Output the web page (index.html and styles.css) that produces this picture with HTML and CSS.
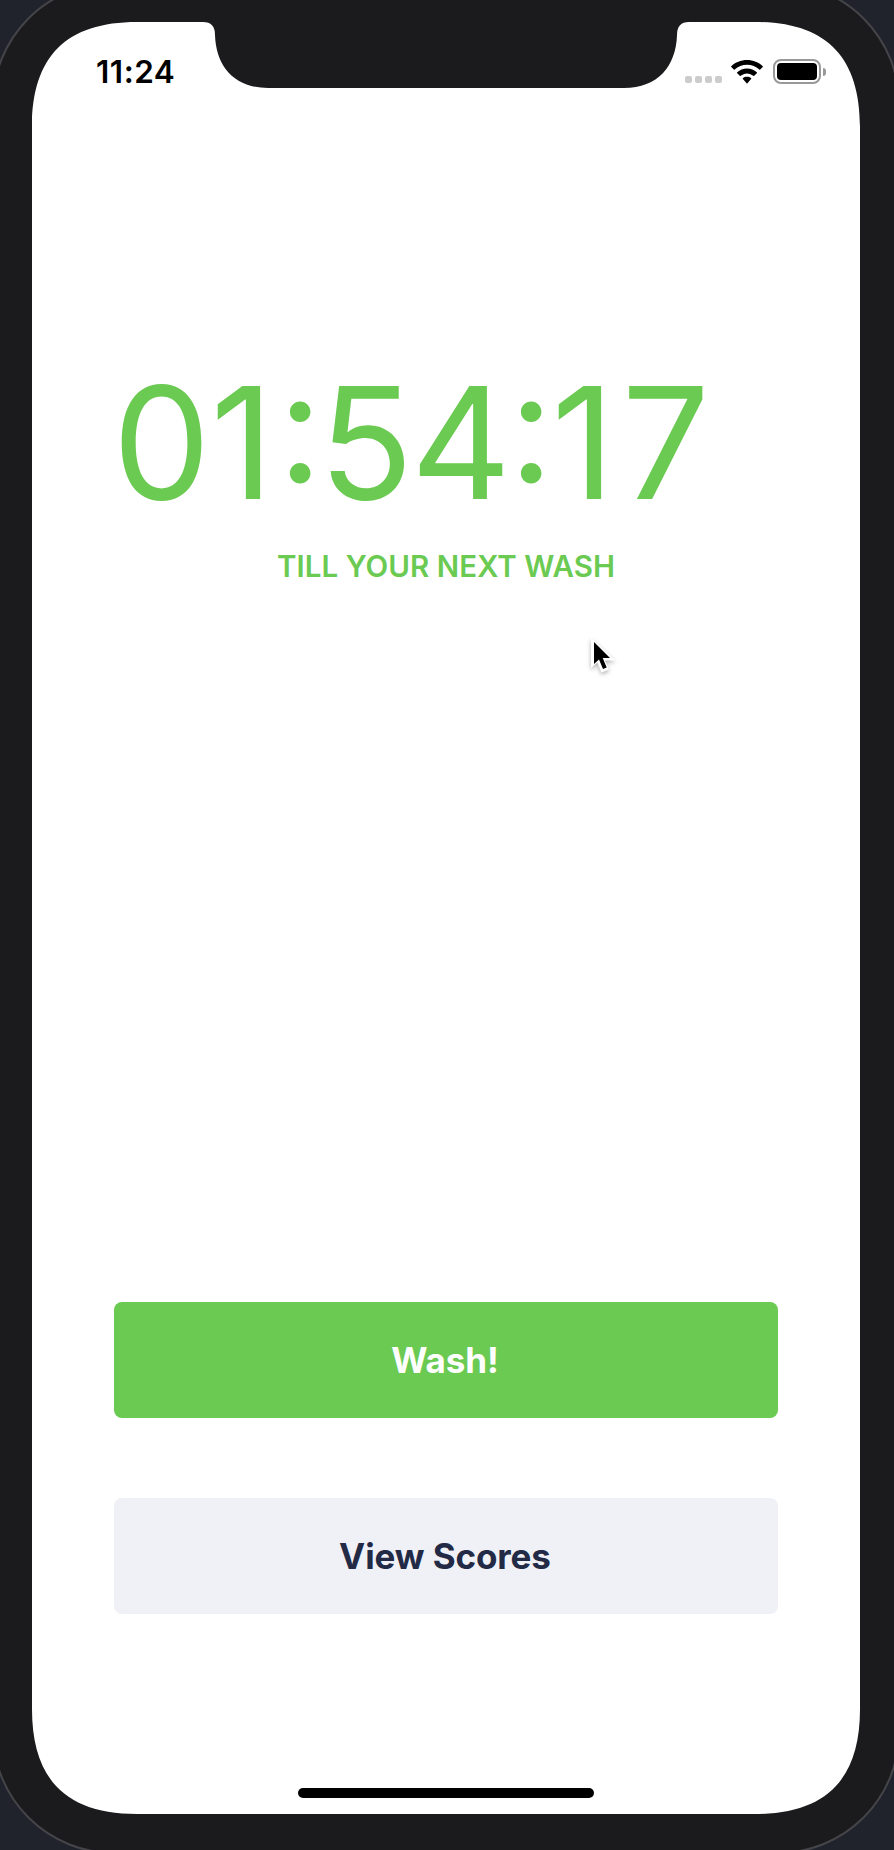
FILE: index.html
```html
<!DOCTYPE html>
<html lang="en">
<head>
  <meta charset="UTF-8">
  <meta name="viewport" content="width=device-width, initial-scale=1.0">
  <title>Next Wash</title>
  <link rel="stylesheet" href="styles.css">
</head>
<body>
  <div class="device">
    <div class="screen">
      <!-- Status bar -->
      <div class="status-bar">
        <span class="clock">11:24</span>
        <div class="status-icons">
          <div class="signal"><i></i><i></i><i></i><i></i></div>
          <svg class="wifi" width="32" height="24" viewBox="0 0 32 24">
            <path d="M16 0C9.9 0 4.300 2.300.3 6.200a.6.6 0 0 0 0 .9l2.500 2.500a.6.600 0 0 0 .9 0C7 6.500 11.300 4.800 16 4.800s9 1.700 12.300 4.800a.6.600 0 0 0 .9 0l2.500-2.500a.6.600 0 0 0 0-.9C27.700 2.300 22.100 0 16 0z"/>
            <path d="M16 8.600c-3.800 0-7.200 1.400-9.800 3.700a.6.600 0 0 0 0 .9l2.600 2.600a.6.600 0 0 0 .9 0c1.700-1.500 3.900-2.400 6.300-2.400s4.600.9 6.300 2.400a.6.600 0 0 0 .9 0l2.600-2.600a.6.600 0 0 0 0-.9c-2.600-2.300-6-3.700-9.800-3.700z"/>
            <path d="M16 16.800c-1.600 0-3 .5-4.100 1.400a.6.600 0 0 0 0 .9l3.700 4.100a.6.600 0 0 0 .8 0l3.700-4.100a.6.600 0 0 0 0-.9c-1.100-.9-2.500-1.400-4.100-1.400z"/>
          </svg>
          <div class="battery"><div class="battery-level"></div></div>
          <div class="battery-cap"></div>
        </div>
      </div>

      <!-- Countdown -->
      <div class="timer">
        <div class="timer-value"><span class="hours">01</span><span class="colon">:</span><span class="minutes">54</span><span class="colon colon-last">:</span><span class="seconds">17</span></div>
        <div class="timer-label">TILL YOUR NEXT WASH</div>
      </div>

      <!-- Actions -->
      <div class="actions">
        <button class="btn btn-primary">Wash!</button>
        <button class="btn btn-secondary">View Scores</button>
      </div>

      <div class="home-indicator"></div>
    </div>
  </div>

  <svg class="cursor" width="32" height="44" viewBox="0 0 32 44">
    <path d="M6 3.500V34L12.400 28.500L16.400 38.500L24 35.500L20 26.500H30Z" fill="#fff"/>
    <path d="M9 8V30L14 25.500L18 35L21.700 33.500L17.700 24H25Z" fill="#000"/>
  </svg>
</body>
</html>
```
FILE: styles.css
```css
* {
  margin: 0;
  padding: 0;
  box-sizing: border-box;
}

body {
  width: 894px;
  height: 1850px;
  overflow: hidden;
  background: #20222c;
  font-family: Inter, "Liberation Sans", sans-serif;
}

/* the device is slightly larger than the window, its edges run off */
.device {
  width: 908px;
  height: 1872px;
  margin: -18px -8px;
  padding: 38px;
  border: 2px solid #454549;
  border-radius: 122px;
  background: #1b1a1c;
}

.screen {
  width: 828px;
  height: 1792px;
  display: flex;
  flex-direction: column;
  background: #fff;
  clip-path: path("M105 0H171C179 0 183 4 183 13C184 44 202 66 236 66H592C626 66 644 44 645 13C645 4 649 0 657 0H723C793.700 0 828 34.300 828 105V1687C828 1757.700 793.700 1792 723 1792H105C34.300 1792 0 1757.700 0 1687V105C0 34.300 34.300 0 105 0Z");
}

.status-bar {
  height: 88px;
  padding: 0 34px 0 64px;
  display: flex;
  justify-content: space-between;
}

.clock {
  padding-top: 31px;
  font-size: 31.500px;
  line-height: 38px;
  font-weight: 600;
  letter-spacing: 0.5px;
}

.status-icons {
  height: 25px;
  margin-top: 37px;
  display: flex;
  align-items: center;
}

.signal {
  display: flex;
  gap: 3px;
  align-self: flex-end;
  margin: 0 9px 1px 0;
}

.signal i {
  width: 7px;
  height: 7px;
  border-radius: 2px;
  background: #ccc;
}

.wifi {
  margin-right: 10px;
}

.battery {
  width: 48px;
  height: 25px;
  padding: 2px;
  border: 2px solid #999;
  border-radius: 8px;
}

.battery-level {
  height: 17px;
  border-radius: 4px;
  background: #000;
}

.battery-cap {
  width: 3px;
  height: 8px;
  margin-left: 2px;
  border-radius: 0 3px 3px 0;
  background: #999;
}

.timer {
  margin: 238px 82px 0;
  color: #6bca52;
}

.timer-value {
  height: 190px;
  font-size: 155.5px;
  line-height: 190px;
  white-space: nowrap;
  font-feature-settings: "case";
}

.hours {
  margin-left: -1.5px;
}

.colon {
  margin: 0 -4px 0 4px;
}

.minutes {
  letter-spacing: -2.5px;
}

.colon-last {
  margin: 0 -2px 0 0;
}

.seconds {
  letter-spacing: 7px;
}

.timer-label {
  margin-top: 10px;
  font-size: 29.500px;
  line-height: 36px;
  font-weight: 600;
  letter-spacing: 0.05px;
  text-align: center;
}

.actions {
  margin: 718px 82px 0;
  display: flex;
  flex-direction: column;
  gap: 80px;
}

.btn {
  height: 116px;
  padding-right: 2px;
  border: none;
  border-radius: 8px;
  font-family: inherit;
  font-size: 35px;
  font-weight: 700;
  letter-spacing: -0.1px;
}

.btn-primary {
  background: #6bca52;
  color: #fff;
}

.btn-secondary {
  background: #f0f1f7;
  color: #232a45;
}

.home-indicator {
  width: 296px;
  height: 10px;
  margin: auto auto 16px;
  border-radius: 5px;
  background: #000;
}

.cursor {
  position: absolute;
  left: 585px;
  top: 634px;
  filter: drop-shadow(0 2px 2px rgba(0, 0, 0, 0.3));
}
```
